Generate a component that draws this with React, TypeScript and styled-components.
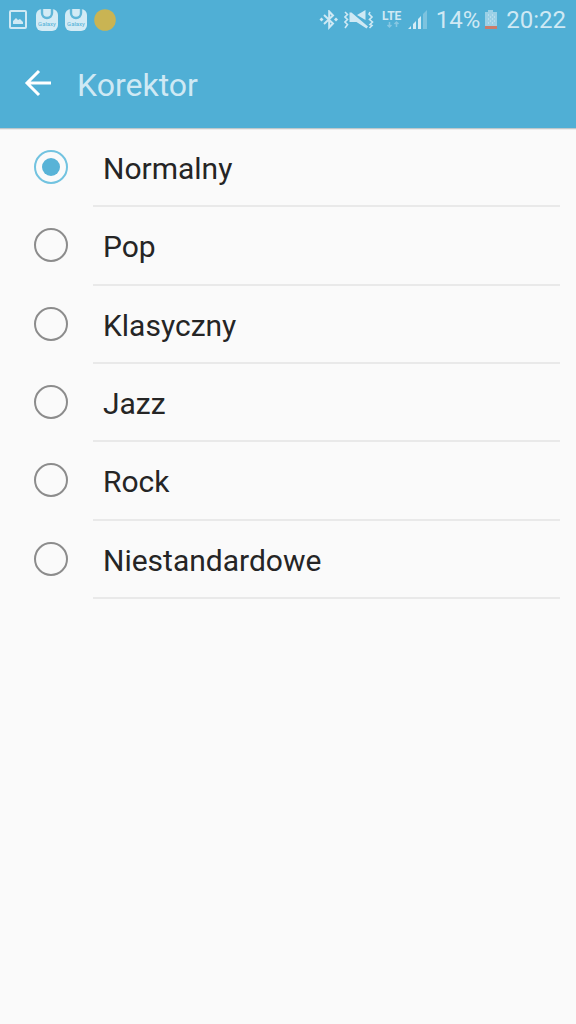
import React, { useState } from "react";
import styled, { createGlobalStyle } from "styled-components";

const GlobalStyle = createGlobalStyle`
  *, *::before, *::after { box-sizing: border-box; }
  body {
    margin: 0;
    background: #fafafa;
    font-family: Roboto, "Noto Sans", sans-serif;
  }
`;

const Screen = styled.div`
  min-height: 100vh;
  background: #fafafa;
`;

const Header = styled.header`
  background: #50afd5;
  border-bottom: 1px solid #bdc8cc;
  box-shadow: 0 1px 0 #ebebeb;
`;

const StatusBar = styled.div`
  display: flex;
  justify-content: space-between;
  align-items: center;
  height: 40px;
  padding: 0 10px 0 8px;
  color: #cfe9f4;
`;

const Notifications = styled.div`
  display: flex;
  align-items: center;
  gap: 7px;
`;

const Indicators = styled.div`
  display: flex;
  align-items: center;
`;

const Glyph = styled.svg<{ $after?: number }>`
  display: block;
  flex: none;
  margin-right: ${(p) => p.$after ?? 0}px;
`;

const StatusText = styled.span<{ $after?: number }>`
  font-size: 24px;
  line-height: 40px;
  margin-right: ${(p) => p.$after ?? 0}px;
`;

const TitleBar = styled.div`
  display: flex;
  align-items: center;
  height: 88px;
  padding: 0 24px;
`;

const BackButton = styled.button`
  display: flex;
  padding: 0 0 2px;
  margin-right: 25px;
  border: 0;
  background: none;
  cursor: pointer;
`;

const Title = styled.h1`
  margin: 0;
  padding-top: 2px;
  font-size: 32px;
  line-height: 40px;
  font-weight: 400;
  color: #cfe9f4;
`;

const Options = styled.main`
  display: grid;
  grid-auto-rows: 1fr;
  height: 470px;
  padding: 0 16px 0 34px;
`;

const Option = styled.label`
  display: flex;
  align-items: center;
  gap: 25px;
  cursor: pointer;
`;

const Radio = styled.input`
  appearance: none;
  display: grid;
  place-items: center;
  flex: none;
  width: 34px;
  height: 34px;
  margin: 0 0 2px;
  border: 2px solid #8c8c8c;
  border-radius: 50%;

  &:checked { border-color: #72c3e0; }

  &:checked::before {
    content: "";
    width: 18px;
    height: 18px;
    border-radius: 50%;
    background: #58b3d7;
  }
`;

const OptionText = styled.span`
  display: flex;
  align-items: center;
  flex: 1;
  align-self: stretch;
  padding: 4px 0 0 10px;
  border-bottom: 2px solid #e9e9e9;
  font-size: 30px;
  line-height: 40px;
  color: #252525;
`;

const PictureIcon = () => (
  <Glyph $after={1} width="20" height="20" viewBox="0 0 20 20" fill="none">
    <rect x="2" y="1" width="16" height="17" rx="1" stroke="#cfe9f4" strokeWidth="2" />
    <path d="M5 14v-3l3-3 2 2 2-1 3 3v2z" fill="#cfe9f4" />
  </Glyph>
);

const StoreIcon = () => (
  <Glyph width="22" height="22" viewBox="0 0 22 22">
    <rect width="22" height="22" rx="6" fill="#d3ebf5" />
    <path d="M6 0v4a5 5 0 0 0 10 0V0" fill="none" stroke="#5fb6d8" strokeWidth="2.400" />
    <text x="11" y="17" textAnchor="middle" fontSize="6" fill="#50afd5">
      Galaxy
    </text>
  </Glyph>
);

const DotIcon = () => (
  <Glyph width="22" height="22" viewBox="0 0 22 22">
    <circle cx="11" cy="11" r="10.8" fill="#c9b453" />
  </Glyph>
);

const BluetoothIcon = () => (
  <Glyph $after={5} width="20" height="20" viewBox="0 0 20 20" fill="none" stroke="#cfe9f4">
    <path d="M5 5l9 8.500L10.200 17.500V1.500L14 5.500 5 14" strokeWidth="2" />
    <path d="M2.500 7.500l2 2-2 2-2-2zM17 7.500l2 2-2 2-2-2z" fill="#cfe9f4" stroke="none" />
  </Glyph>
);

const MuteVibrateIcon = () => (
  <Glyph $after={8} width="30" height="20" viewBox="0 0 30 20" fill="none" stroke="#cfe9f4">
    <path
      d="M1 2l2.500 2.500L1 7l2.500 2.500L1 12l2.500 2.500L1 18M26 2l-1 2 3 3-2.500 2.500L28.500 12 26 14.500l2 1L25.500 18"
      strokeWidth="1.600"
    />
    <path
      d="M13 5 21.500 0v10zM5.500 2.500h2L24 16.500 22.500 18.500 21 17.500 12.500 12h-7z"
      fill="#cfe9f4"
      stroke="none"
    />
  </Glyph>
);

const LteIcon = () => (
  <Glyph $after={4} width="22" height="22" viewBox="0 0 22 22">
    <text x="0" y="11" fontSize="12" fontWeight="700" fill="#cfe9f4">
      LTE
    </text>
    <path
      d="M7.500 13v5M5.500 16l2 2 2-2M14.500 18v-5M12.500 15l2-2 2 2"
      fill="none"
      stroke="#86c7e2"
      strokeWidth="1.500"
    />
  </Glyph>
);

const SignalIcon = () => (
  <Glyph $after={8} width="20" height="20" viewBox="0 0 20 20">
    <path d="M0 19l3-3v3zM5 14l3-3v8H5zM10 9l3-3v13h-3z" fill="#d3ebf5" />
    <path d="M15 4l4-4v19h-4z" fill="#7dc3df" />
  </Glyph>
);

const BatteryIcon = () => (
  <Glyph $after={8} width="14" height="20" viewBox="0 0 14 20">
    <path d="M4 0h5v2h4v15H1V2h3z" fill="#9bd0e6" />
    <path
      d="M4 5h1M8 5h1M6 7h1M10 7h1M4 9h1M8 9h1M6 11h1M10 11h1M4 13h1M8 13h1"
      stroke="#d3ebf5"
    />
    <path d="M1 16h12v3H1z" fill="#ca7c6b" />
  </Glyph>
);

const presets = ["Normalny", "Pop", "Klasyczny", "Jazz", "Rock", "Niestandardowe"];

export default function App() {
  const [selected, setSelected] = useState(presets[0]);

  return (
    <Screen>
      <GlobalStyle />
      <Header>
        <StatusBar>
          <Notifications>
            <PictureIcon />
            <StoreIcon />
            <StoreIcon />
            <DotIcon />
          </Notifications>
          <Indicators>
            <BluetoothIcon />
            <MuteVibrateIcon />
            <LteIcon />
            <SignalIcon />
            <StatusText $after={4}>14%</StatusText>
            <BatteryIcon />
            <StatusText>20:22</StatusText>
          </Indicators>
        </StatusBar>
        <TitleBar>
          <BackButton type="button" aria-label="Wstecz">
            <Glyph width="28" height="28" viewBox="0 0 28 28" fill="none">
              <path d="M15 2 3 14l12 12M3 14h24" stroke="#fff" strokeWidth="3" />
            </Glyph>
          </BackButton>
          <Title>Korektor</Title>
        </TitleBar>
      </Header>
      <Options role="radiogroup" aria-label="Korektor">
        {presets.map((name) => (
          <Option key={name}>
            <Radio
              type="radio"
              name="preset"
              value={name}
              checked={selected === name}
              onChange={() => setSelected(name)}
            />
            <OptionText>{name}</OptionText>
          </Option>
        ))}
      </Options>
    </Screen>
  );
}
